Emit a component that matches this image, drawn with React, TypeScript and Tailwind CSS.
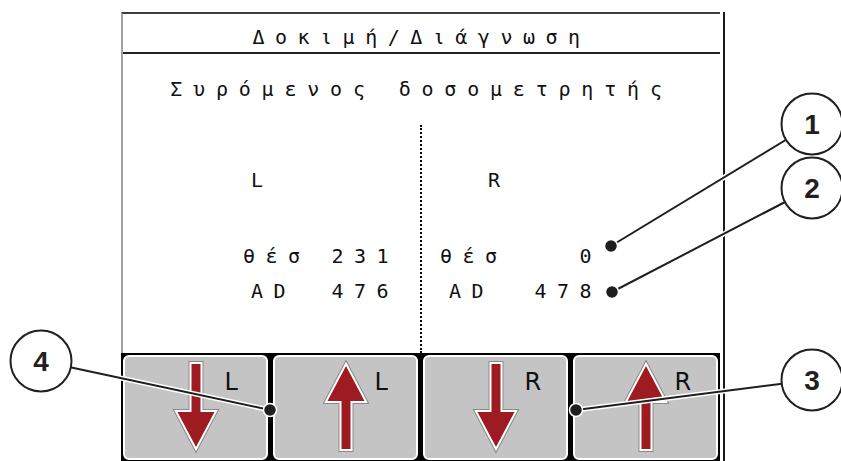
import React from "react";

const RED = "#9e1b21";

function ArrowDown() {
  const pts = "19.5,6 28.5,6 28.5,54 42.5,54 24,89 5.5,54 19.5,54";
  return (
    <svg width="48" height="100" viewBox="0 0 48 100">
      <polygon points={pts} fill="#8a8a8a" stroke="#8a8a8a" strokeWidth="6" strokeLinejoin="miter" />
      <polygon points={pts} fill="#ffffff" stroke="#ffffff" strokeWidth="4" strokeLinejoin="miter" />
      <polygon points={pts} fill={RED} />
    </svg>
  );
}

function ArrowUp() {
  const pts = "24,8 42.5,43 28.5,43 28.5,91 19.5,91 19.5,43 5.5,43";
  return (
    <svg width="48" height="100" viewBox="0 0 48 100">
      <polygon points={pts} fill="#8a8a8a" stroke="#8a8a8a" strokeWidth="6" strokeLinejoin="miter" />
      <polygon points={pts} fill="#ffffff" stroke="#ffffff" strokeWidth="4" strokeLinejoin="miter" />
      <polygon points={pts} fill={RED} />
    </svg>
  );
}

function SoftKey({ up, label }: { up: boolean; label: string }) {
  return (
    <div className="bg-[#c4c4c4] border-2 border-white rounded-[6px] pt-[1px] grid grid-cols-[1fr_auto_1fr] items-start">
      <div />
      {up ? <ArrowUp /> : <ArrowDown />}
      <div
        className="pl-[5px] mt-[12px] text-[24px] leading-[24px] text-[#111]"
        style={{ fontFamily: '"DejaVu Sans", sans-serif' }}
      >
        {label}
      </div>
    </div>
  );
}

const mono = { fontFamily: '"DejaVu Sans Mono", "Liberation Mono", monospace' };

function Callouts() {
  const circles = [
    { n: "1", cx: 812, cy: 124, dx: 611, dy: 246 },
    { n: "2", cx: 812, cy: 188, dx: 612, dy: 292 },
    { n: "3", cx: 812, cy: 380, dx: 576, dy: 410 },
    { n: "4", cx: 41, cy: 361, dx: 270, dy: 410 },
  ];
  return (
    <svg
      className="absolute left-0 top-0 pointer-events-none"
      width="841"
      height="461"
      viewBox="0 0 841 461"
    >
      {circles.map((c) => (
        <g key={"l" + c.n}>
          <line x1={c.dx} y1={c.dy} x2={c.cx} y2={c.cy} stroke="#ffffff" strokeWidth="5" />
          <line x1={c.dx} y1={c.dy} x2={c.cx} y2={c.cy} stroke="#1e1e1e" strokeWidth="2" />
          <circle cx={c.dx} cy={c.dy} r="6.5" fill="#1e1e1e" stroke="#ffffff" strokeWidth="1.5" />
        </g>
      ))}
      {circles.map((c) => (
        <g key={"c" + c.n}>
          <circle cx={c.cx} cy={c.cy} r="30.5" fill="#ffffff" stroke="#231f20" strokeWidth="2" />
          <text
            x={c.cx}
            y={c.cy + 10}
            textAnchor="middle"
            fontSize="28"
            fontWeight="700"
            fill="#231f20"
            style={{ fontFamily: '"Liberation Sans", Arial, sans-serif' }}
          >
            {c.n}
          </text>
        </g>
      ))}
    </svg>
  );
}

export default function App() {
  return (
    <div className="relative w-[841px] h-[461px] overflow-hidden bg-white">
      <div className="flex pl-[121px] pt-[12px] h-full">
        <div className="w-[599px] h-[449px] flex flex-col">
          <div
            className="h-[341px] flex flex-col border-l-2 border-l-[#a3a3a3] border-t-2 border-t-[#3d3d3d] text-[#111]"
            style={mono}
          >
            <div className="h-[38px] pt-[13px] text-center text-[20px] leading-[20px] tracking-[10.5px]">
              Δοκιμή/Διάγνωση
            </div>
            <div className="h-[2px] bg-[#222]" />
            <div className="flex-1 flex flex-col">
              <div className="mt-[25px] h-[20px] text-center text-[20px] leading-[20px] tracking-[10.8px] whitespace-pre">
                Συρόμενος δοσομετρητής
              </div>
              <div className="mt-[26px] flex-1 flex text-[20px] leading-[20px] tracking-[10.5px]">
                <div className="w-[297px] flex flex-col pt-[45px]">
                  <div className="h-[20px] pl-[128px]">L</div>
                  <div className="mt-[56px] h-[20px] flex pr-[21px]">
                    <span className="ml-[120px]">θέσ</span>
                    <span className="ml-auto">231</span>
                  </div>
                  <div className="mt-[15px] h-[20px] flex pr-[21px]">
                    <span className="ml-[128px]">AD</span>
                    <span className="ml-auto">476</span>
                  </div>
                </div>
                <div className="border-l-2 border-dotted border-black" />
                <div className="flex-1 flex flex-col pt-[45px]">
                  <div className="h-[20px] pl-[66px]">R</div>
                  <div className="mt-[56px] h-[20px] flex pr-[118px]">
                    <span className="ml-[18px]">θέσ</span>
                    <span className="ml-auto">0</span>
                  </div>
                  <div className="mt-[15px] h-[20px] flex pr-[118px]">
                    <span className="ml-[27px]">AD</span>
                    <span className="ml-auto">478</span>
                  </div>
                </div>
              </div>
            </div>
          </div>
          <div className="flex-1 bg-black px-[2px] pt-[2px] pb-[1px] grid grid-cols-4 gap-[5px]">
            <SoftKey up={false} label="L" />
            <SoftKey up={true} label="L" />
            <SoftKey up={false} label="R" />
            <SoftKey up={true} label="R" />
          </div>
        </div>
        <div className="w-[3px]" />
        <div className="w-[2px] bg-[#1a1a1a]" />
      </div>
      <Callouts />
    </div>
  );
}
